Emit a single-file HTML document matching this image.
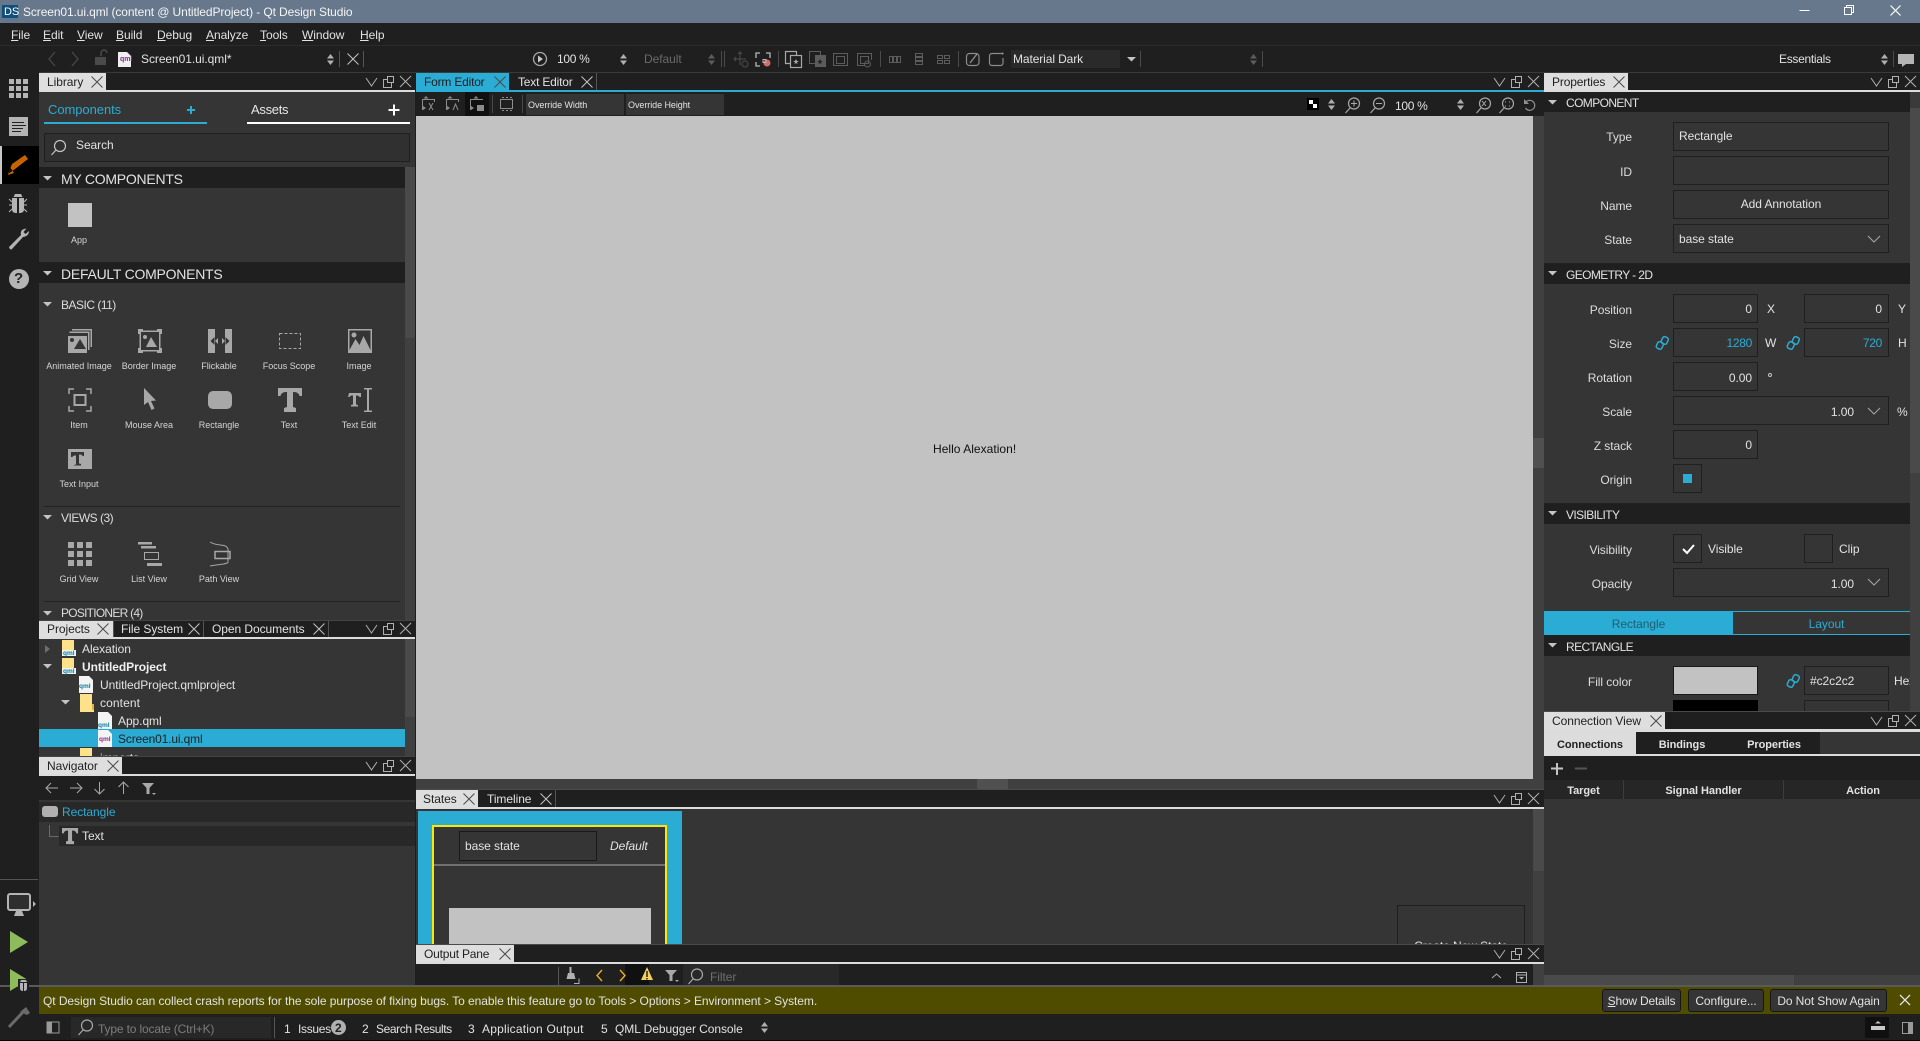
<!DOCTYPE html>
<html><head><meta charset="utf-8"><title>Qt Design Studio</title>
<style>
html,body{margin:0;padding:0;background:#1f1f1f}
#r{position:relative;width:1920px;height:1041px;overflow:hidden;background:#1f1f1f;font-family:"Liberation Sans",sans-serif}
#r div{position:absolute}
p{position:absolute;margin:0;white-space:nowrap;line-height:16px;font-size:12px;color:#e2e2e2;letter-spacing:-.06px}
u{text-decoration:underline}
.l{right:288px;text-align:right;color:#dcdcdc}
.s{font-size:9px;transform:translateX(-50%);color:#d4d4d4;letter-spacing:0}
.h{font-size:14px;color:#e2e2e2;margin-top:1px;letter-spacing:-.25px}
.c{letter-spacing:-.6px}
.d{color:#1f1f1f}
.f{background:#353535;border:1px solid #1f1f1f;box-sizing:border-box}
.b{background:#353535;border:1px solid #161616;border-radius:3px;box-sizing:border-box}
svg{position:absolute;left:0;top:0}
.ic{fill:#a8a8a8}
</style></head><body><div id="r">

<!-- title & bars -->
<div style="left:0;top:0;width:1920px;height:23px;background:#68788c"></div>
<div style="left:0;top:45px;width:1920px;height:1px;background:#2c2c2c"></div>
<div style="left:39px;top:72px;width:1881px;height:1px;background:#3a3a3a"></div>
<div style="left:2px;top:5px;width:16px;height:13px;background:#0e4f7c"></div>

<!-- left mode bar -->
<div style="left:0;top:146px;width:39px;height:38px;background:#000"></div>
<div style="left:0;top:146px;width:2px;height:38px;background:#c8c8c8"></div>
<div style="left:0;top:879px;width:38px;height:1px;background:#555"></div>

<!-- library -->
<div style="left:39px;top:92px;width:376px;height:528px;background:#353535"></div>
<div style="left:39px;top:73px;width:67px;height:17px;background:#dedede"></div>
<div style="left:39px;top:90px;width:376px;height:2px;background:#dcdcdc"></div>
<div style="left:44px;top:122px;width:163px;height:2px;background:#2bacd4"></div>
<div style="left:247px;top:122px;width:163px;height:2px;background:#fff"></div>
<div class="f" style="left:44px;top:133px;width:366px;height:29px;background:#303030"></div>
<div style="left:39px;top:167px;width:366px;height:21px;background:#1f1f1f"></div>
<div style="left:39px;top:262px;width:366px;height:21px;background:#1f1f1f"></div>
<div style="left:405px;top:167px;width:10px;height:171px;background:#4a4a4a"></div>
<div style="left:405px;top:338px;width:10px;height:282px;background:#404040"></div>
<div style="left:68px;top:203px;width:24px;height:24px;background:#c2c2c2"></div>
<div style="left:44px;top:506px;width:356px;height:1px;background:#222"></div>
<div style="left:44px;top:601px;width:356px;height:1px;background:#222"></div>

<!-- projects -->
<div style="left:39px;top:620px;width:376px;height:1px;background:#444"></div>
<div style="left:39px;top:621px;width:74px;height:16px;background:#dedede"></div>
<div style="left:203px;top:621px;width:1px;height:16px;background:#555"></div>
<div style="left:328px;top:621px;width:1px;height:16px;background:#555"></div>
<div style="left:39px;top:637px;width:376px;height:2px;background:#dcdcdc"></div>
<div style="left:39px;top:639px;width:376px;height:117px;background:#353535;overflow:hidden">
 <div style="left:0;top:90px;width:366px;height:18px;background:#2bacd4"></div>
 <div style="left:366px;top:0;width:10px;height:78px;background:#4a4a4a"></div>
 <div style="left:366px;top:78px;width:10px;height:39px;background:#404040"></div>
 <div style="left:41px;top:109px;width:12px;height:16px;background:#fde28a"></div>
 <p style="left:61px;top:111px">imports</p>
</div>

<!-- navigator -->
<div style="left:39px;top:756px;width:376px;height:1px;background:#444"></div>
<div style="left:39px;top:757px;width:83px;height:17px;background:#dedede"></div>
<div style="left:39px;top:774px;width:376px;height:2px;background:#dcdcdc"></div>
<div style="left:39px;top:776px;width:376px;height:210px;background:#353535"></div>
<div style="left:39px;top:776px;width:376px;height:24px;background:#1f1f1f"></div>
<div style="left:39px;top:802px;width:376px;height:20px;background:#282828"></div>
<div style="left:59px;top:826px;width:356px;height:20px;background:#282828"></div>

<!-- center -->
<div style="left:416px;top:73px;width:93px;height:17px;background:#2bacd4"></div>
<div style="left:596px;top:73px;width:1px;height:17px;background:#555"></div>
<div style="left:416px;top:90px;width:1128px;height:2px;background:#2bacd4"></div>
<div style="left:465px;top:92px;width:24px;height:24px;background:#101010"></div>
<div style="left:526px;top:94px;width:98px;height:21px;background:#353535"></div>
<div style="left:626px;top:94px;width:98px;height:21px;background:#353535"></div>
<div style="left:1011px;top:50px;width:109px;height:18px;background:#2a2a2a"></div>
<div style="left:416px;top:116px;width:1117px;height:663px;background:#c2c2c2"></div>
<div style="left:1533px;top:116px;width:11px;height:673px;background:#404040"></div>
<div style="left:1533px;top:438px;width:11px;height:30px;background:#505050"></div>
<div style="left:416px;top:779px;width:1117px;height:10px;background:#404040"></div>
<div style="left:977px;top:779px;width:31px;height:10px;background:#505050"></div>
<div style="left:1307px;top:98px;width:12px;height:12px;background:#000"></div>
<div style="left:1309px;top:100px;width:4px;height:4px;background:#fff"></div>
<div style="left:1313px;top:104px;width:4px;height:4px;background:#fff"></div>

<!-- states -->
<div style="left:416px;top:789px;width:1128px;height:1px;background:#4a4a4a"></div>
<div style="left:416px;top:790px;width:62px;height:17px;background:#dedede"></div>
<div style="left:555px;top:790px;width:1px;height:17px;background:#555"></div>
<div style="left:416px;top:807px;width:1128px;height:2px;background:#dcdcdc"></div>
<div style="left:416px;top:809px;width:1117px;height:135px;background:#353535"></div>
<div style="left:1533px;top:809px;width:11px;height:62px;background:#4a4a4a"></div>
<div style="left:1533px;top:871px;width:11px;height:73px;background:#404040"></div>
<div style="left:418px;top:811px;width:264px;height:133px;background:#2bacd4"></div>
<div style="left:432px;top:825px;width:235px;height:119px;border:2px solid #ffe600;border-bottom:0;box-sizing:border-box;background:#353535"></div>
<div class="f" style="left:459px;top:831px;width:138px;height:30px;border-color:#1a1a1a"></div>
<div style="left:434px;top:864px;width:231px;height:2px;background:#707070"></div>
<div style="left:449px;top:908px;width:202px;height:36px;background:#c2c2c2"></div>
<div style="left:1397px;top:905px;width:128px;height:39px;border:1px solid #1f1f1f;border-bottom:0;box-sizing:border-box;overflow:hidden"><p style="left:0;width:126px;text-align:center;top:32px">Create New State</p></div>

<!-- output -->
<div style="left:416px;top:944px;width:1128px;height:1px;background:#4a4a4a"></div>
<div style="left:416px;top:945px;width:98px;height:17px;background:#dedede"></div>
<div style="left:416px;top:962px;width:1128px;height:2px;background:#dcdcdc"></div>
<div style="left:625px;top:964px;width:24px;height:21px;background:#101010"></div>
<div style="left:683px;top:964px;width:156px;height:21px;background:#282828"></div>
<div style="left:1533px;top:964px;width:11px;height:21px;background:#404040"></div>

<!-- properties -->
<div style="left:1544px;top:92px;width:366px;height:619px;background:#353535"></div>
<div style="left:1544px;top:73px;width:84px;height:17px;background:#dedede"></div>
<div style="left:1544px;top:90px;width:376px;height:2px;background:#dcdcdc"></div>
<div style="left:1910px;top:92px;width:10px;height:16px;background:#3a3a3a"></div>
<div style="left:1910px;top:108px;width:10px;height:365px;background:#4a4a4a"></div>
<div style="left:1910px;top:473px;width:10px;height:238px;background:#404040"></div>
<div style="left:1544px;top:92px;width:366px;height:20px;background:#1f1f1f"></div>
<div style="left:1544px;top:263px;width:366px;height:21px;background:#1f1f1f"></div>
<div style="left:1544px;top:503px;width:366px;height:21px;background:#1f1f1f"></div>
<div style="left:1544px;top:635px;width:366px;height:21px;background:#1f1f1f"></div>

<div class="f" style="left:1673px;top:122px;width:216px;height:29px"></div>
<div class="f" style="left:1673px;top:156px;width:216px;height:29px"></div>
<div class="f" style="left:1673px;top:190px;width:216px;height:29px"></div>
<div class="f" style="left:1673px;top:224px;width:216px;height:29px"></div>
<div class="f" style="left:1673px;top:294px;width:85px;height:29px"></div>
<div class="f" style="left:1804px;top:294px;width:85px;height:29px"></div>
<div class="f" style="left:1673px;top:328px;width:85px;height:29px"></div>
<div class="f" style="left:1804px;top:328px;width:85px;height:29px"></div>
<div class="f" style="left:1673px;top:362px;width:85px;height:29px"></div>
<div class="f" style="left:1673px;top:396px;width:216px;height:29px"></div>
<div class="f" style="left:1673px;top:430px;width:85px;height:29px"></div>
<div class="f" style="left:1673px;top:464px;width:29px;height:29px"></div>
<div style="left:1683px;top:474px;width:9px;height:9px;background:#2bacd4"></div>
<div class="f" style="left:1673px;top:534px;width:29px;height:29px"></div>
<div class="f" style="left:1804px;top:534px;width:29px;height:29px"></div>
<div class="f" style="left:1673px;top:568px;width:216px;height:29px"></div>
<div style="left:1544px;top:611px;width:189px;height:24px;background:#2bacd4"></div>
<div style="left:1733px;top:611px;width:177px;height:1px;background:#2bacd4"></div>
<div style="left:1733px;top:634px;width:177px;height:1px;background:#2bacd4"></div>
<div style="left:1673px;top:666px;width:85px;height:29px;background:#c2c2c2;border:1px solid #1a1a1a;box-sizing:border-box"></div>
<div class="f" style="left:1804px;top:666px;width:85px;height:29px"></div>
<div style="left:1673px;top:700px;width:85px;height:11px;background:#000"></div>
<div class="f" style="left:1804px;top:700px;width:85px;height:12px"></div>

<!-- connection view -->
<div style="left:1544px;top:711px;width:376px;height:1px;background:#4a4a4a"></div>
<div style="left:1544px;top:712px;width:121px;height:17px;background:#dedede"></div>
<div style="left:1544px;top:729px;width:376px;height:3px;background:#dcdcdc"></div>
<div style="left:1544px;top:732px;width:376px;height:22px;background:#353535"></div>
<div style="left:1544px;top:732px;width:276px;height:22px;background:#1f1f1f"></div>
<div style="left:1544px;top:732px;width:92px;height:22px;background:#dcdcdc"></div>
<div style="left:1544px;top:754px;width:376px;height:2px;background:#dcdcdc"></div>
<div style="left:1544px;top:756px;width:376px;height:24px;background:#1f1f1f"></div>
<div style="left:1544px;top:780px;width:376px;height:19px;background:#262626"></div>
<div style="left:1623px;top:780px;width:1px;height:19px;background:#3c3c3c"></div>
<div style="left:1783px;top:780px;width:1px;height:19px;background:#3c3c3c"></div>
<div style="left:1544px;top:799px;width:376px;height:176px;background:#353535"></div>
<div style="left:1544px;top:975px;width:376px;height:10px;background:#404040"></div>
<div style="left:1544px;top:975px;width:250px;height:10px;background:#4a4a4a"></div>

<!-- notification -->
<div style="left:0;top:985px;width:1920px;height:2px;background:#5a5a5a"></div>
<div style="left:39px;top:987px;width:1881px;height:27px;background:#4f4c00"></div>
<div class="b" style="left:1602px;top:989px;width:79px;height:23px"></div>
<div class="b" style="left:1688px;top:989px;width:76px;height:23px"></div>
<div class="b" style="left:1770px;top:989px;width:117px;height:23px"></div>

<!-- status -->
<div style="left:71px;top:1017px;width:200px;height:21px;background:#282828"></div>
<div style="left:274px;top:1017px;width:1px;height:21px;background:#555"></div>
<div style="left:331px;top:1020px;width:15px;height:15px;border-radius:8px;background:#b0b0b0"></div>
<div style="left:1865px;top:1017px;width:24px;height:21px;background:#101010"></div>
<div style="left:0;top:1040px;width:1920px;height:1px;background:#000"></div>

<svg width="1920" height="1041" viewBox="0 0 1920 1041">
<defs>
<g id="x" fill="none" stroke="#c4c4c4" stroke-width="1"><path d="M.5.5l11 11M11.500.5l-11 11"/></g>
<g id="xk" fill="none" stroke="#4a4a4a" stroke-width="1"><path d="M.5.5l11 11M11.500.5l-11 11"/></g>
<g id="dock" fill="none" stroke="#b0b0b0" stroke-width="1"><path d="M0 3l5.500 8 5.500-8"/><path d="M21 4.500h-3.500v8h8V8"/><path d="M21.500 1.500h6v6h-6z"/><path d="M34 1l11 11M45 1l-11 11"/></g>
<g id="spin" fill="#b0b0b0"><path d="M0 4.500L3.500 0 7 4.500zM0 6.500h7L3.500 11z"/></g>
<g id="spind" fill="#5c5c5c"><path d="M0 4.500L3.500 0 7 4.500zM0 6.500h7L3.500 11z"/></g>
<g id="tri" fill="#c4c4c4"><path d="M0 0h9L4.500 4.500z"/></g>
<g id="chev" fill="none" stroke="#a8a8a8"><path d="M0 0l6 6 6-6"/></g>
<g id="link" fill="none" stroke="#2bacd4" stroke-width="1.500"><rect x="5" y="0" width="6" height="7" rx="2" transform="rotate(25 8 3)"/><rect x="0" y="5" width="6" height="7" rx="2" transform="rotate(25 3 8)"/></g>
<g id="mag" fill="none" stroke="#a8a8a8" stroke-width="1.200"><circle cx="9" cy="6.500" r="5.500"/><path d="M5 11l-4.500 5"/></g>
<g id="anim" class="ic"><path d="M4 0h20v18h-1.500V1.500H4zM1.500 2.500h20V21H20V4H1.500z"/><path d="M0 7h19v17H0z"/><path d="M6 20l6-10 6 10z" fill="#353535"/><circle cx="4" cy="11" r="2" fill="#353535"/></g>
<g id="bord" class="ic"><path d="M0 0h5v1.500h14V0h5v5h-1.500v14H24v5h-5v-1.500H5V24H0v-5h1.500V5H0zM3 3v18h18V3z"/><path d="M8 18l5-10 6 10z"/><circle cx="7" cy="8" r="2"/></g>
<g id="flick" class="ic"><path d="M0 0h7v24H0zM17 0h7v24h-7z"/><path d="M2.500 12l4-4v8zM21.500 12l-4-4v8z" fill="#353535"/><path d="M7 12l3-3v6zM17 12l-3-3v6z"/></g>
<g id="focus" fill="none" stroke="#a8a8a8" stroke-dasharray="3 2"><rect x="1.500" y="4.500" width="21" height="15"/></g>
<g id="img" class="ic"><path d="M0 0h24v24H0zM1.500 1.500V21h21V1.500z" fill-rule="evenodd"/><path d="M1.500 21l6-11 4 6 4-9 7 14z"/><circle cx="6" cy="6" r="2.500"/></g>
<g id="item" fill="none" stroke="#a8a8a8" stroke-width="1.500"><path d="M6 1H1v5M18 1h5v5M6 23H1v-5M18 23h5v-5"/><rect x="6.500" y="7" width="11" height="10" stroke-width="2"/></g>
<g id="mouse" class="ic"><path d="M8 0v17l4-3 3.500 8 3-1.500-3.500-7.500 5-.5z"/></g>
<g id="rect" class="ic"><rect x="0" y="3" width="24" height="18" rx="5"/></g>
<g id="bigt" class="ic"><path d="M0 0h24v8h-2.500q-1-4-5.500-4h-1v15l3 1v4H6v-4l3-1V4H8q-4.500 0-5.500 4H0z"/></g>
<g id="tedit" class="ic"><path d="M1 5h12v4h-1.500q-.5-1.500-3-1.500h-.5v9l2 .5v1.500H3v-1.500l2-.5v-9h-.5q-2.500 0-3 1.500H0z"/><path d="M16 0h8v1.500h-3v21h3V24h-8v-1.500h3v-21h-3z"/></g>
<g id="tinp" class="ic"><path d="M0 0h24v20H0z"/><path d="M3 3h13v4h-1.500q-.5-1.500-2.500-1.500h-1v9l2 .5v1.500H6V16l2-.5v-9H7q-2 0-2.500 1.500H3z" fill="#353535"/></g>
<g id="grid" class="ic"><path d="M0 0h6v6H0zM9 0h6v6H9zM18 0h6v6h-6zM0 9h6v6H0zM9 9h6v6H9zM18 9h6v6h-6zM0 18h6v6H0zM9 18h6v6H9zM18 18h6v6h-6z"/></g>
<g id="list" class="ic"><path d="M0 0h14v2.500H0zM3 4h15v2.500H3zM9 21h15v3H9z"/><rect x="6.500" y="10.500" width="14" height="7" fill="none" stroke="#a8a8a8" stroke-width="1"/></g>
<g id="pth" fill="none" stroke="#a8a8a8" stroke-width="1"><path d="M1 0c8 5 16 1 18 7v13c0 2-6 2-18 4"/><rect x="6" y="9.500" width="15" height="7" stroke-width="1.500"/></g>
<g id="qfile"><path d="M0 0h10l4 4v13H0z" fill="#f4f4f4"/></g>
<g id="fold"><path d="M0 0h12v10H0z" fill="#fde28a"/><path d="M0 10h14v6H0z" fill="#eef4f6"/></g>
<g id="fold2"><path d="M0 0h12v12h2v6H0z" fill="#fde28a"/><path d="M12 10h2v6h-2z" fill="#e0b040"/></g>
<g id="filt" fill="#a8a8a8"><path d="M0 0h12l-4.500 5v6h-3V5z"/><path d="M10 10h4l-2 2z"/></g>
</defs>

<!-- window controls -->
<path d="M1799.500 10.500h10" stroke="#fff" stroke-width="1"/>
<path d="M1844.500 7.500h7v7h-7zM1846.500 7V5.500h7v7H1852" fill="none" stroke="#fff"/>
<path d="M1890.500 5.500l10 10M1900.500 5.500l-10 10" stroke="#fff" stroke-width="1.200"/>

<!-- mode icons -->
<path fill="#b4b4b4" d="M9 79h5v5H9zM16 79h5v5h-5zM23 79h5v5h-5zM9 86h5v5H9zM16 86h5v5h-5zM23 86h5v5h-5zM9 93h5v5H9zM16 93h5v5h-5zM23 93h5v5h-5z"/>
<rect x="9" y="117" width="19" height="19" fill="#b4b4b4"/><path d="M12 122.500h12M12 125.500h14M12 128.500h11M12 131.500h9" stroke="#222"/>
<path d="M8 174l4-10 13-9 3 4-13 10z M8 175l6-2-3.500-5z" fill="#c86400"/>
<path fill="#b4b4b4" d="M15 194h6l1.500 3h-9zM12 198h5v15h-1q-4 0-4-4zM19 198h5v11q0 4-4 4h-1z"/><path d="M9 199l3 3M27 199l-3 3M9 205h3M24 205h3M9 212l3-3M27 212l-3-3" stroke="#b4b4b4"/>
<path fill="#b4b4b4" d="M9 247l12-12q-1-5 3-6l2.500-.5-3 3.500 2 2 3.500-3q0 5-6 6L11.500 249.500q-2 0-2.500-2.500z"/>
<circle cx="19" cy="279" r="10" fill="#b4b4b4"/>
<!-- bottom mode -->
<rect x="8" y="894" width="22" height="16" rx="2" fill="#2e2e2e" stroke="#b4b4b4" stroke-width="2"/><path fill="#b4b4b4" d="M16 911h6l2 5H14z"/><path fill="#b4b4b4" d="M33 901l3 3-3 3z"/>
<path fill="#8ebc5c" d="M10 931l18 11-18 11z"/>
<path fill="#8ebc5c" d="M10 969l18 11-18 11z"/><path fill="#222" d="M18 979h11v12H18z"/><path fill="#b4b4b4" d="M21 980h5l1 2h-7zM20 983h3v8q-3 0-3-3zM24 983h3v5q0 3-3 3z"/>
<path d="M9 1027l15-16" stroke="#6a6a6a" stroke-width="3"/><path fill="#6a6a6a" d="M20 1012l6-5 4 6-3 2z"/>

<!-- toolbar -->
<path d="M55 52l-6 7 6 7M72 52l6 7-6 7" fill="none" stroke="#4a4a4a" stroke-width="1.200"/>
<path d="M95 57h11v8H95z" fill="#4a4a4a"/><path d="M101 56v-3a3 3 0 016 0" fill="none" stroke="#4a4a4a" stroke-width="1.500"/>
<path d="M118 52h9l4 4v11h-13z" fill="#efefef"/>
<use href="#spin" x="327" y="54"/>
<path d="M339.500 51v16M363.500 51v16" stroke="#555"/>
<use href="#x" x="347" y="53"/>
<circle cx="540" cy="59" r="6.500" fill="none" stroke="#a8a8a8" stroke-width="1.300"/><path d="M538 55.500l5 3.500-5 3.500z" fill="#c8c8c8"/>
<use href="#spin" x="620" y="54"/><use href="#spind" x="708" y="54"/>
<path d="M721.500 51v16M724.500 51v16M778.500 51v16M880.500 51v16M958.500 51v16M1140.500 51v16M1262.500 51v16M1893.500 51v16" stroke="#4a4a4a"/>
<g fill="none" stroke="#4c4c4c"><path d="M740 52v13M734 59h12M738 54l2-2 2 2M736 57l-2 2 2 2"/><circle cx="745" cy="64" r="3"/></g>
<path d="M760 53h-4v5M766 53h4v5M756 62v4h4" fill="none" stroke="#b8b8b8" stroke-width="1.300"/><circle cx="767" cy="63" r="3.500" fill="#d46a6a"/><path d="M763 59.500h3v3h-3z" fill="none" stroke="#b8b8b8"/>
<g fill="none" stroke="#a8a8a8" stroke-width="1.200"><path d="M790 63.500h-4.500v-12h11V55"/><rect x="790.500" y="55.500" width="11" height="12"/></g><path d="M796 59l1 2h2l-2 1.200.6 2-1.600-1.200-1.600 1.200.6-2-2-1.200h2z" fill="#a8a8a8"/>
<g fill="none" stroke="#5c5c5c"><path d="M815 63.500h-5.500v-12h11V55"/></g><rect x="815" y="55" width="11" height="12" fill="#5c5c5c"/><path d="M820 59l1 2h2l-2 1.200.6 2-1.600-1.200-1.600 1.200.6-2-2-1.200h2z" fill="#222"/>
<g fill="none" stroke="#5c5c5c"><path d="M833 53.500h15M833 65.500h15M833.500 53v13M847.500 53v13"/><rect x="836.500" y="56.500" width="8" height="7"/>
<path d="M857 53.500h15M857 65.500h8M857.500 53v13M871.500 53v7"/><rect x="860.500" y="56.500" width="8" height="7"/><circle cx="867.500" cy="64" r="3"/>
<rect x="889.500" y="56.500" width="3" height="6"/><rect x="893.500" y="56.500" width="3" height="6"/><rect x="897.500" y="56.500" width="3" height="6"/>
<rect x="915.500" y="53.500" width="7" height="3"/><rect x="915.500" y="57.500" width="7" height="3"/><rect x="915.500" y="61.500" width="7" height="3"/>
<rect x="937.500" y="55.500" width="5" height="3"/><rect x="944.500" y="55.500" width="5" height="3"/><rect x="937.500" y="60.500" width="5" height="3"/><rect x="944.500" y="60.500" width="5" height="3"/></g>
<rect x="966.500" y="53.500" width="12.500" height="12" rx="3" fill="none" stroke="#8c8c8c" stroke-width="1.200"/><path d="M970 63l7-9" stroke="#8c8c8c" stroke-width="1.400"/>
<path d="M1003 58v5a2.500 2.500 0 01-2.500 2.500h-8.500a2.500 2.500 0 01-2.500-2.500v-7a2.500 2.500 0 012.500-2.500h10" fill="none" stroke="#8c8c8c" stroke-width="1.200"/><path d="M1002 52l2 1.500-2 1.500z" fill="#8c8c8c"/>
<use href="#tri" x="1127" y="57"/>
<use href="#spind" x="1250" y="54"/>
<use href="#spin" x="1881" y="54"/>
<path d="M1898 54h16v10h-8l-4 3v-3h-4z" fill="#b4b4b4"/>

<!-- library tab icons -->
<use href="#xk" x="91" y="76"/><use href="#dock" x="366" y="75"/>
<path d="M191 106v8M187 110h8" stroke="#2bacd4" stroke-width="2"/>
<path d="M394 104.500v11M388.500 110h11" stroke="#fff" stroke-width="2"/>
<g fill="none" stroke="#c4c4c4" stroke-width="1.200"><circle cx="60" cy="146" r="5.500"/><path d="M56 150l-4.500 5"/></g>
<use href="#tri" x="43" y="176"/><use href="#tri" x="43" y="271"/>
<use href="#tri" x="43" y="302"/><use href="#tri" x="43" y="515"/><use href="#tri" x="43" y="611"/>

<use href="#anim" x="68" y="329"/><use href="#bord" x="138" y="329"/><use href="#flick" x="208" y="329"/><use href="#focus" x="278" y="329"/><use href="#img" x="348" y="329"/>
<use href="#item" x="68" y="388"/><use href="#mouse" x="136" y="388"/><use href="#rect" x="208" y="388"/><use href="#bigt" x="278" y="388"/><use href="#tedit" x="348" y="388"/>
<use href="#tinp" x="68" y="449"/>
<use href="#grid" x="68" y="542"/><use href="#list" x="138" y="542"/><use href="#pth" x="209" y="542"/>

<!-- projects tabs -->
<use href="#xk" x="97" y="623"/><use href="#x" x="188" y="623"/><use href="#x" x="313" y="623"/><use href="#dock" x="366" y="622"/>
<path d="M113.500 621v16" stroke="#555"/>
<path d="M45 645l5 4-5 4z" fill="#6e6e6e"/>
<use href="#tri" x="43" y="664"/><use href="#tri" x="61" y="700"/>
<use href="#fold" x="62" y="640"/><use href="#fold" x="62" y="658"/>
<text x="63" y="655" font-size="6.500" fill="#0a7f9c" font-family="Liberation Sans,sans-serif" font-weight="bold">qml</text>
<text x="63" y="673" font-size="6.500" fill="#0a7f9c" font-family="Liberation Sans,sans-serif" font-weight="bold">qml</text>
<use href="#qfile" x="79" y="676"/><text x="79" y="688" font-size="6.500" fill="#0a7f9c" font-family="Liberation Sans,sans-serif" font-weight="bold">qml</text>
<use href="#fold2" x="80" y="694"/>
<use href="#qfile" x="98" y="712"/><text x="98" y="727" font-size="6.500" fill="#0a7f9c" font-family="Liberation Sans,sans-serif" font-weight="bold">qml</text>
<use href="#qfile" x="98" y="730"/><text x="99" y="741" font-size="6.500" fill="#8a2a90" font-family="Liberation Sans,sans-serif" font-weight="bold">qml</text>

<!-- navigator -->
<use href="#xk" x="107" y="760"/><use href="#dock" x="366" y="759"/>
<g fill="none" stroke="#a8a8a8"><path d="M46 788h12M51 783l-5 5 5 5M70 788h12M77 783l5 5-5 5M99.500 782v12M94.500 789l5 5 5-5M123.500 782v12M118.500 787l5-5 5 5"/></g>
<use href="#filt" x="142" y="783"/>
<rect x="42" y="806" width="16" height="11" rx="3" fill="#b0b0b0"/>
<path d="M49.500 825v11.500h9" fill="none" stroke="#6a6a6a"/>
<g transform="translate(62 828) scale(.67)"><use href="#bigt"/></g>

<!-- center tab icons -->
<use href="#xk" x="494" y="76"/><use href="#x" x="581" y="76"/><use href="#dock" x="1494" y="75"/>
<g fill="none" stroke="#8c8c8c">
 <path d="M422.500 110V99.500H434.500V102"/><path d="M429 103l4 7M433 103l-4 7"/>
 <path d="M446.500 110V99.500H458.500V102"/><path d="M453 110l2.500-6 2.500 6"/>
 <path d="M470.500 110V99.500H483"/>
 <rect x="500.500" y="99.500" width="12" height="9"/>
</g>
<g fill="#8c8c8c"><path d="M426 96l2.500 2.500h-5zM450 96l2.500 2.500h-5zM476 96l2.500 2.500h-5zM423 106l3 2-3 2zM447 106l3 2-3 2zM471 106l3 2-3 2z"/><rect x="477" y="105" width="7" height="6"/></g>
<path d="M502 97.500h2M506 97.500h2M510 97.500h2M502 110.500h2M506 110.500h2M510 110.500h2" stroke="#8c8c8c"/>
<path d="M492.500 95v18M522.500 95v18" stroke="#4a4a4a"/>
<use href="#spin" x="1328" y="99"/>
<use href="#mag" x="1345" y="97"/><path d="M1351 103.500h6M1354 100.500v6" stroke="#a8a8a8"/>
<use href="#mag" x="1370" y="97"/><path d="M1376 103.500h6" stroke="#a8a8a8"/>
<use href="#spin" x="1457" y="99"/>
<use href="#mag" x="1476" y="97"/><path d="M1482 101l4 5M1486 101l-4 5" stroke="#a8a8a8"/>
<use href="#mag" x="1499" y="97"/><path d="M1505 102h1M1509 102h1M1505 106h1M1509 106h1" stroke="#a8a8a8"/>
<path d="M1526 102a5 5 0 11-.5 6" fill="none" stroke="#909090" stroke-width="1.200"/><path d="M1524 99v5h5z" fill="#909090"/>

<!-- properties icons -->
<use href="#xk" x="1613" y="76"/><use href="#dock" x="1871" y="75"/>
<use href="#tri" x="1548" y="100"/><use href="#tri" x="1548" y="271"/><use href="#tri" x="1548" y="511"/><use href="#tri" x="1548" y="643"/>
<use href="#chev" x="1868" y="236"/><use href="#chev" x="1868" y="408"/><use href="#chev" x="1868" y="579"/>
<use href="#link" x="1657" y="337"/><use href="#link" x="1788" y="337"/><use href="#link" x="1788" y="675"/>
<circle cx="1770" cy="375" r="1.500" fill="none" stroke="#c4c4c4"/>
<path d="M1683 549l4 4 7-8" fill="none" stroke="#fff" stroke-width="2"/>

<!-- connection -->
<use href="#xk" x="1650" y="715"/><use href="#dock" x="1871" y="714"/>
<path d="M1557 763v12M1551 768.500h12" stroke="#c4c4c4" stroke-width="2"/>
<path d="M1575 768.500h12" stroke="#555" stroke-width="2"/>

<!-- states -->
<use href="#xk" x="463" y="793"/><use href="#x" x="540" y="793"/><use href="#dock" x="1494" y="792"/>
<!-- output -->
<use href="#xk" x="499" y="948"/><use href="#dock" x="1494" y="947"/>
<path d="M558.500 967v18" stroke="#555"/>
<path d="M570.500 967v6" stroke="#b0b0b0" stroke-width="2"/><path d="M568 973h6l1.500 6h-9z" fill="#b0b0b0"/><path d="M574 983.500h5v-5" fill="none" stroke="#b0b0b0"/>
<path d="M602 970l-5 5.500 5 5.500" fill="none" stroke="#e8b020" stroke-width="1.400"/>
<path d="M620 970l5 5.500-5 5.500" fill="none" stroke="#e8b020" stroke-width="1.400"/>
<path d="M647 967l6 13h-12z" fill="#f4d060"/><path d="M647 971v6M647 978v1.500" stroke="#222" stroke-width="1.500"/>
<use href="#filt" x="665" y="970"/>
<g transform="translate(688 968)"><use href="#mag"/></g>
<path d="M1492 978l4.500-4 4.500 4" fill="none" stroke="#b0b0b0"/>
<path d="M1516.500 972.500h10v10h-10zM1517 975h9" fill="none" stroke="#b0b0b0"/><path d="M1519 977h5l-2.500 2.500z" fill="#b0b0b0"/>

<!-- notification close -->
<path d="M1900 995l10 10M1910 995l-10 10" stroke="#e4e4e4" stroke-width="1.300"/>

<!-- status -->
<path d="M47 1022h12v11H47z" fill="none" stroke="#9a9a9a"/><path d="M47 1022h5v11h-5z" fill="#9a9a9a"/>
<g transform="translate(78 1019)"><use href="#mag"/></g>
<use href="#spin" x="761" y="1022"/>
<path d="M1871 1026h14v4h-14z" fill="#c8c8c8"/><path d="M1878 1021l3 2.500h-6z" fill="#c8c8c8"/>
<path d="M1902.500 1022.500h10v11h-10z" fill="none" stroke="#9a9a9a"/><path d="M1908 1022h5v12h-5z" fill="#9a9a9a"/>
</svg>

<!-- TEXT -->
<p style="left:4px;top:4px;font-size:11px;color:#fff">DS</p>
<p style="left:23px;top:4px;color:#f4f4f4;letter-spacing:-.1px">Screen01.ui.qml (content @ UntitledProject) - Qt Design Studio</p>
<p style="left:11px;top:27px"><u>F</u>ile</p><p style="left:43px;top:27px"><u>E</u>dit</p><p style="left:77px;top:27px"><u>V</u>iew</p><p style="left:116px;top:27px"><u>B</u>uild</p><p style="left:157px;top:27px"><u>D</u>ebug</p><p style="left:206px;top:27px"><u>A</u>nalyze</p><p style="left:260px;top:27px"><u>T</u>ools</p><p style="left:302px;top:27px"><u>W</u>indow</p><p style="left:360px;top:27px"><u>H</u>elp</p>
<p style="left:141px;top:51px">Screen01.ui.qml*</p>
<p style="left:120px;top:55px;font-size:7px;line-height:10px;color:#8a2a90;font-weight:bold">qml</p>
<p style="left:557px;top:51px;letter-spacing:-.3px">100 %</p>
<p style="left:644px;top:51px;color:#6a6a6a">Default</p>
<p style="left:1013px;top:51px;letter-spacing:-.1px">Material Dark</p>
<p style="left:1779px;top:51px;letter-spacing:-.3px">Essentials</p>

<p class="d" style="left:47px;top:74px">Library</p>
<p style="left:48px;top:102px;font-size:13px;color:#2bacd4">Components</p>
<p style="left:251px;top:102px;font-size:13px;color:#e6e6e6;letter-spacing:-.3px">Assets</p>
<p style="left:76px;top:137px">Search</p>
<p class="h" style="left:61px;top:170px">MY COMPONENTS</p>
<p class="h" style="left:61px;top:265px">DEFAULT COMPONENTS</p>
<p class="s" style="left:79px;top:232px">App</p>
<p style="left:61px;top:297px;color:#dcdcdc;letter-spacing:-.5px">BASIC (11)</p>
<p class="s" style="left:79px;top:358px">Animated Image</p><p class="s" style="left:149px;top:358px">Border Image</p><p class="s" style="left:219px;top:358px">Flickable</p><p class="s" style="left:289px;top:358px">Focus Scope</p><p class="s" style="left:359px;top:358px">Image</p>
<p class="s" style="left:79px;top:417px">Item</p><p class="s" style="left:149px;top:417px">Mouse Area</p><p class="s" style="left:219px;top:417px">Rectangle</p><p class="s" style="left:289px;top:417px">Text</p><p class="s" style="left:359px;top:417px">Text Edit</p>
<p class="s" style="left:79px;top:476px">Text Input</p>
<p style="left:61px;top:510px;color:#dcdcdc;letter-spacing:-.5px">VIEWS (3)</p>
<p class="s" style="left:79px;top:571px">Grid View</p><p class="s" style="left:149px;top:571px">List View</p><p class="s" style="left:219px;top:571px">Path View</p>
<p style="left:61px;top:605px;color:#dcdcdc;letter-spacing:-.75px">POSITIONER (4)</p>

<p class="d" style="left:47px;top:621px">Projects</p><p style="left:121px;top:621px">File System</p><p style="left:212px;top:621px">Open Documents</p>
<p style="left:82px;top:641px">Alexation</p>
<p style="left:82px;top:659px;font-weight:bold;color:#f0f0f0">UntitledProject</p>
<p style="left:100px;top:677px">UntitledProject.qmlproject</p>
<p style="left:100px;top:695px;letter-spacing:.1px">content</p>
<p style="left:118px;top:713px">App.qml</p>
<p class="d" style="left:118px;top:731px;letter-spacing:-.15px">Screen01.ui.qml</p>

<p class="d" style="left:47px;top:758px">Navigator</p>
<p style="left:62px;top:804px;color:#2bacd4">Rectangle</p>
<p style="left:82px;top:828px">Text</p>

<p style="left:424px;top:74px;color:#1f1f1f;letter-spacing:-.2px">Form Editor</p>
<p style="left:518px;top:74px;letter-spacing:-.2px">Text Editor</p>
<p style="left:528px;top:97px;font-size:9px">Override Width</p>
<p style="left:628px;top:97px;font-size:9px">Override Height</p>
<p style="left:1395px;top:98px;letter-spacing:-.3px">100 %</p>
<p style="left:933px;top:441px;color:#111;letter-spacing:.03px">Hello Alexation!</p>

<p class="d" style="left:423px;top:791px">States</p><p style="left:487px;top:791px">Timeline</p>
<p style="left:465px;top:838px">base state</p>
<p style="left:610px;top:838px;font-style:italic">Default</p>
<p class="d" style="left:424px;top:946px;letter-spacing:-.2px">Output Pane</p>
<p style="left:710px;top:969px;color:#6e6e6e">Filter</p>

<p class="d" style="left:1552px;top:74px;letter-spacing:-.15px">Properties</p>
<p class="c" style="left:1566px;top:95px">COMPONENT</p>
<p class="l" style="top:129px">Type</p><p style="left:1679px;top:128px">Rectangle</p>
<p class="l" style="top:164px">ID</p>
<p class="l" style="top:198px">Name</p><p style="left:1673px;width:216px;text-align:center;top:196px">Add Annotation</p>
<p class="l" style="top:232px">State</p><p style="left:1679px;top:231px">base state</p>
<p class="c" style="left:1566px;top:267px">GEOMETRY - 2D</p>
<p class="l" style="top:302px">Position</p><p style="right:168px;top:301px">0</p><p style="left:1767px;top:301px">X</p><p style="right:38px;top:301px">0</p><p style="left:1898px;top:301px">Y</p>
<p class="l" style="top:336px">Size</p><p style="right:168px;top:335px;color:#2bacd4;letter-spacing:-.3px">1280</p><p style="left:1765px;top:335px">W</p><p style="right:38px;top:335px;color:#2bacd4;letter-spacing:-.3px">720</p><p style="left:1898px;top:335px">H</p>
<p class="l" style="top:370px">Rotation</p><p style="right:168px;top:370px">0.00</p>
<p class="l" style="top:404px">Scale</p><p style="right:66px;top:404px">1.00</p><p style="left:1897px;top:404px">%</p>
<p class="l" style="top:438px">Z stack</p><p style="right:168px;top:437px">0</p>
<p class="l" style="top:472px">Origin</p>
<p class="c" style="left:1566px;top:507px">VISIBILITY</p>
<p class="l" style="top:542px">Visibility</p><p style="left:1708px;top:541px">Visible</p><p style="left:1839px;top:541px">Clip</p>
<p class="l" style="top:576px">Opacity</p><p style="right:66px;top:576px">1.00</p>
<p style="left:1544px;width:189px;text-align:center;top:616px;color:#1f5f70">Rectangle</p>
<p style="left:1733px;width:187px;text-align:center;top:616px;color:#2bacd4">Layout</p>
<p class="c" style="left:1566px;top:639px">RECTANGLE</p>
<p class="l" style="top:674px">Fill color</p><p style="left:1810px;top:673px">#c2c2c2</p>
<p style="left:1894px;top:673px;width:16px;overflow:hidden">Hex</p>

<p class="d" style="left:1552px;top:713px">Connection View</p>
<p style="left:1544px;width:92px;text-align:center;top:737px;color:#1f1f1f;font-weight:bold;font-size:11px">Connections</p>
<p style="left:1636px;width:92px;text-align:center;top:737px;font-weight:bold;font-size:11px">Bindings</p>
<p style="left:1728px;width:92px;text-align:center;top:737px;font-weight:bold;font-size:11px">Properties</p>
<p style="left:1544px;width:79px;text-align:center;top:783px;font-size:11px;font-weight:bold">Target</p>
<p style="left:1624px;width:159px;text-align:center;top:783px;font-size:11px;font-weight:bold">Signal Handler</p>
<p style="left:1784px;width:158px;text-align:center;top:783px;font-size:11px;font-weight:bold">Action</p>

<p style="left:43px;top:993px">Qt Design Studio can collect crash reports for the sole purpose of fixing bugs. To enable this feature go to Tools &gt; Options &gt; Environment &gt; System.</p>
<p style="left:1602px;width:79px;text-align:center;top:993px;letter-spacing:-.2px"><u>S</u>how Details</p>
<p style="left:1688px;width:76px;text-align:center;top:993px">Configure...</p>
<p style="left:1770px;width:117px;text-align:center;top:993px;letter-spacing:-.1px">Do Not Show Again</p>

<p style="left:98px;top:1021px;color:#7c7c7c;letter-spacing:-.15px">Type to locate (Ctrl+K)</p>
<p style="left:284px;top:1021px">1</p><p style="left:298px;top:1021px;letter-spacing:-.3px">Issues</p><p style="left:335px;top:1020px;font-weight:bold;color:#222">2</p>
<p style="left:362px;top:1021px">2</p><p style="left:376px;top:1021px;letter-spacing:-.4px">Search Results</p>
<p style="left:468px;top:1021px">3</p><p style="left:482px;top:1021px;letter-spacing:.2px">Application Output</p>
<p style="left:601px;top:1021px">5</p><p style="left:615px;top:1021px">QML Debugger Console</p>

<p style="left:14px;top:271px;font-size:15px;font-weight:bold;color:#222">?</p>
</div></body></html>
